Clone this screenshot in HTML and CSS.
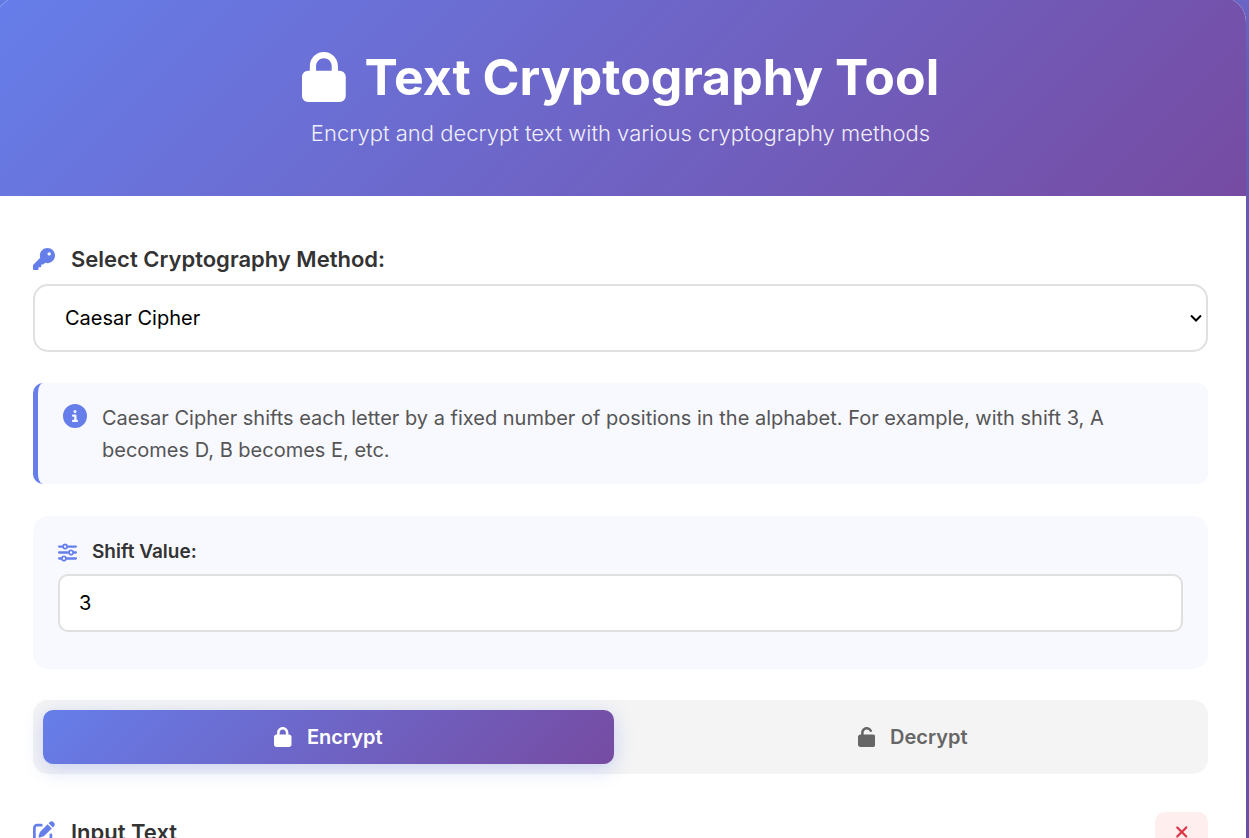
FILE: index.html
```html
<!DOCTYPE html>
<html lang="en">
<head>
<meta charset="utf-8">
<meta name="viewport" content="width=device-width, initial-scale=1">
<title>Text Cryptography Tool</title>
<link rel="stylesheet" href="styles.css">
</head>
<body>
<div class="container">
  <header class="header">
    <h1 class="title">
      <svg class="icon" viewBox="0 0 448 512" aria-hidden="true"><path d="M144 144v48H304V144c0-44.200-35.800-80-80-80s-80 35.800-80 80zM80 192V144C80 64.500 144.500 0 224 0s144 64.500 144 144v48h16c35.300 0 64 28.700 64 64V448c0 35.300-28.700 64-64 64H64c-35.300 0-64-28.700-64-64V256c0-35.300 28.700-64 64-64H80z"/></svg>
      Text Cryptography Tool
    </h1>
    <p class="subtitle">Encrypt and decrypt text with various cryptography methods</p>
  </header>
  <main class="content">
    <section class="method">
      <label class="label" for="method">
        <svg class="icon" viewBox="0 0 512 512" aria-hidden="true"><path d="M336 352c97.200 0 176-78.800 176-176S433.200 0 336 0S160 78.800 160 176c0 18.700 2.900 36.800 8.300 53.700L7 391c-4.500 4.500-7 10.600-7 17v80c0 13.300 10.700 24 24 24h80c13.300 0 24-10.700 24-24V448h40c13.300 0 24-10.700 24-24V384h40c6.400 0 12.500-2.500 17-7l33.300-33.300c16.900 5.400 35 8.300 53.700 8.300zM376 96a40 40 0 1 1 0 80 40 40 0 1 1 0-80z"/></svg>
        Select Cryptography Method:
      </label>
      <div class="select-wrap">
        <select class="select" id="method"><option>Caesar Cipher</option></select>
        <svg class="chevron" viewBox="0 0 12 8" aria-hidden="true"><path d="M1 1.500L6 6.500L11 1.500"/></svg>
      </div>
    </section>
    <div class="info">
      <svg class="icon" viewBox="0 0 512 512" aria-hidden="true"><path d="M256 512A256 256 0 1 0 256 0a256 256 0 1 0 0 512zM216 336h24V272H216c-13.300 0-24-10.700-24-24s10.700-24 24-24h48c13.300 0 24 10.700 24 24v88h8c13.300 0 24 10.700 24 24s-10.700 24-24 24H216c-13.300 0-24-10.700-24-24s10.700-24 24-24zm40-208a32 32 0 1 1 0 64 32 32 0 1 1 0-64z"/></svg>
      <p class="info-text">Caesar Cipher shifts each letter by a fixed number of positions in the alphabet. For example, with shift 3, A becomes D, B becomes E, etc.</p>
    </div>
    <section class="params">
      <label class="label label-small" for="shift">
        <svg class="icon" viewBox="0 0 512 512" aria-hidden="true"><path d="M0 416c0 17.700 14.300 32 32 32l54.700 0c12.300 28.300 40.500 48 73.300 48s61-19.700 73.300-48L480 448c17.700 0 32-14.300 32-32s-14.300-32-32-32l-246.700 0c-12.300-28.300-40.500-48-73.300-48s-61 19.700-73.300 48L32 384c-17.700 0-32 14.300-32 32zm128 0a32 32 0 1 1 64 0 32 32 0 1 1 -64 0zM320 256a32 32 0 1 1 64 0 32 32 0 1 1 -64 0zm32-80c-32.800 0-61 19.700-73.300 48L32 224c-17.700 0-32 14.300-32 32s14.300 32 32 32l246.700 0c12.300 28.300 40.500 48 73.300 48s61-19.700 73.300-48l54.700 0c17.700 0 32-14.300 32-32s-14.300-32-32-32l-54.700 0c-12.300-28.300-40.500-48-73.300-48zM192 128a32 32 0 1 1 0-64 32 32 0 1 1 0 64zm73.300-64C253 35.700 224.800 16 192 16s-61 19.700-73.300 48L32 64C14.300 64 0 78.300 0 96s14.300 32 32 32l86.700 0c12.300 28.300 40.500 48 73.300 48s61-19.700 73.300-48L480 128c17.700 0 32-14.300 32-32s-14.300-32-32-32L265.300 64z"/></svg>
        Shift Value:
      </label>
      <input class="input" id="shift" type="number" value="3">
    </section>
    <div class="tabs">
      <button class="tab tab-active" type="button">
        <svg class="icon" viewBox="0 0 448 512" aria-hidden="true"><path d="M144 144v48H304V144c0-44.200-35.800-80-80-80s-80 35.800-80 80zM80 192V144C80 64.500 144.500 0 224 0s144 64.500 144 144v48h16c35.300 0 64 28.700 64 64V448c0 35.300-28.700 64-64 64H64c-35.300 0-64-28.700-64-64V256c0-35.300 28.700-64 64-64H80z"/></svg>
        Encrypt
      </button>
      <button class="tab" type="button">
        <svg class="icon" viewBox="0 0 448 512" aria-hidden="true"><path d="M144 144c0-44.200 35.800-80 80-80c31.900 0 59.400 18.600 72.300 45.700c7.600 16 26.700 22.800 42.600 15.200s22.800-26.700 15.200-42.600C331 33.700 281.500 0 224 0C144.500 0 80 64.500 80 144v48H64c-35.300 0-64 28.700-64 64V448c0 35.300 28.700 64 64 64H384c35.300 0 64-28.700 64-64V256c0-35.300-28.700-64-64-64H144V144z"/></svg>
        Decrypt
      </button>
    </div>
    <div class="section-head">
      <h2 class="label">
        <svg class="icon" viewBox="0 0 512 512" aria-hidden="true"><path d="M471.600 21.700c-21.900-21.900-57.300-21.900-79.200 0L362.300 51.700l97.900 97.900 30.100-30.100c21.900-21.900 21.900-57.300 0-79.200L471.600 21.700zm-299.200 220c-6.100 6.100-10.800 13.600-13.500 21.900l-29.600 88.800c-2.900 8.600-.6 18.100 5.800 24.600s15.900 8.700 24.600 5.800l88.800-29.600c8.200-2.700 15.700-7.400 21.900-13.500L437.700 172.300 339.700 74.300 172.400 241.700zM96 64C43 64 0 107 0 160V416c0 53 43 96 96 96H352c53 0 96-43 96-96V320c0-17.700-14.300-32-32-32s-32 14.300-32 32v96c0 17.700-14.300 32-32 32H96c-17.700 0-32-14.300-32-32V160c0-17.700 14.300-32 32-32h96c17.700 0 32-14.300 32-32s-14.300-32-32-32H96z"/></svg>
        Input Text
      </h2>
      <button class="clear" type="button" aria-label="Clear">
        <svg class="icon" viewBox="0 0 384 512" aria-hidden="true"><path d="M342.600 150.600c12.500-12.500 12.500-32.800 0-45.300s-32.800-12.500-45.300 0L192 210.700 86.600 105.400c-12.500-12.500-32.800-12.500-45.300 0s-12.500 32.800 0 45.300L146.700 256 41.400 361.400c-12.500 12.500-12.500 32.800 0 45.300s32.800 12.500 45.300 0L192 301.300 297.400 406.600c12.500 12.500 32.800 12.500 45.300 0s12.500-32.800 0-45.300L237.300 256 342.600 150.600z"/></svg>
      </button>
    </div>
  </main>
</div>
</body>
</html>
```
FILE: styles.css
```css
* {
  box-sizing: border-box;
  margin: 0;
  padding: 0;
}

body {
  height: 100vh;
  overflow: hidden;
  font-family: Inter, "Liberation Sans", sans-serif;
  color: #333;
  background: linear-gradient(135deg, #667eea 0%, #764ba2 100%) 0 0 / 100% 200vh;
}

.container {
  margin: -3px 3px 0 -5px;
  overflow: hidden;
  background: #fff;
  border-radius: 25px;
  box-shadow: 0 25px 75px rgba(0, 0, 0, 0.2);
}

.icon {
  flex: none;
  height: 1em;
  fill: currentColor;
}

.header {
  padding: 50px 38px 45px;
  text-align: center;
  color: #fff;
  background: linear-gradient(135deg, #667eea 0%, #764ba2 100%);
}

.title {
  display: flex;
  justify-content: center;
  align-items: center;
  gap: 19px;
  margin-bottom: 8px;
  font-size: 50px;
  line-height: 60px;
  font-weight: 700;
}

.subtitle {
  font-size: 22px;
  line-height: 36px;
  font-weight: 300;
  opacity: 0.9;
}

.content {
  padding: 47px 38px 38px;
}

.method,
.params {
  margin-bottom: 31px;
}

.info {
  margin-bottom: 32px;
}

.label {
  display: flex;
  align-items: center;
  gap: 16px;
  margin-bottom: 9px;
  font-size: 22px;
  line-height: 32px;
  font-weight: 600;
}

.label .icon {
  color: #667eea;
}

.label-small {
  gap: 15px;
  margin-bottom: 6px;
  font-size: 19px;
}

.select-wrap {
  display: grid;
  align-items: center;
}

.select {
  grid-area: 1 / 1;
  width: 100%;
  height: 68px;
  padding: 0 30px;
  appearance: none;
  font: inherit;
  font-size: 20px;
  color: #000;
  background: #fff;
  border: 2px solid #e0e0e0;
  border-radius: 15px;
}

.chevron {
  grid-area: 1 / 1;
  justify-self: end;
  width: 12px;
  height: 8px;
  margin-right: 6px;
  fill: none;
  stroke: #000;
  stroke-width: 2;
  pointer-events: none;
}

.info {
  display: flex;
  gap: 15px;
  padding: 19px 25px 18px;
  background: #f8f9ff;
  border-left: 5px solid #667eea;
  border-radius: 10px;
}

.info .icon {
  margin-top: 2px;
  font-size: 24px;
  color: #667eea;
}

.info-text {
  font-size: 20px;
  line-height: 32px;
  color: #555;
}

.params {
  padding: 20px 25px 37px;
  background: #f8f9ff;
  border-radius: 15px;
}

.input {
  display: block;
  width: 100%;
  height: 58px;
  padding: 0 19px;
  font: inherit;
  font-size: 20px;
  color: #000;
  background: #fff;
  border: 2px solid #e0e0e0;
  border-radius: 10px;
}

.tabs {
  display: flex;
  gap: 13px;
  margin-bottom: 38px;
  padding: 10px;
  background: #f4f4f4;
  border-radius: 15px;
}

.tab {
  display: flex;
  flex: 1;
  justify-content: center;
  align-items: center;
  gap: 15px;
  height: 54px;
  font: inherit;
  font-size: 20px;
  font-weight: 600;
  color: #666;
  background: transparent;
  border: 0;
  border-radius: 10px;
}

.tab-active {
  color: #fff;
  background: linear-gradient(135deg, #667eea 0%, #764ba2 100%);
  box-shadow: 0 5px 19px rgba(102, 126, 234, 0.3);
}

.section-head {
  display: flex;
  justify-content: space-between;
  align-items: center;
}

.section-head .label {
  margin-bottom: 0;
}

.clear {
  display: flex;
  justify-content: center;
  align-items: center;
  width: 53px;
  height: 40px;
  font-size: 18px;
  color: #dc3545;
  background: #ffeeee;
  border: 0;
  border-radius: 10px;
}
```
